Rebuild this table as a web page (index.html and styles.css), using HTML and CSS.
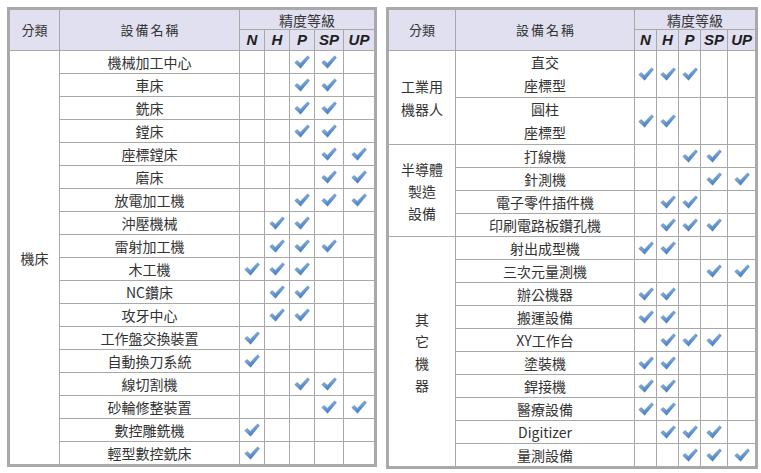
FILE: index.html
```html
<!DOCTYPE html>
<html lang="zh-Hant">
<head>
<meta charset="utf-8">
<link rel="stylesheet" href="styles.css">
</head>
<body>
<svg class="defs" width="0" height="0" aria-hidden="true">
  <defs>
    <linearGradient id="g" x1="0" y1="0" x2="0.6" y2="1">
      <stop offset="0" stop-color="#c0d7f0"/>
      <stop offset="0.45" stop-color="#78a7dc"/>
      <stop offset="1" stop-color="#3870b9"/>
    </linearGradient>
    <symbol id="ck" viewBox="0 0 16 14">
      <path d="M0.8 7.6 L3.2 5.6 L6.3 8.4 L13.6 0.9 L15.4 2.6 L6.6 13.2 Z" fill="url(#g)" stroke="#4a7dbd" stroke-width="0.6" stroke-linejoin="round"/>
    </symbol>
  </defs>
</svg>
<div class="wrap">
<table class="tbl left">
  <colgroup><col class="w-cat"><col class="w-name"><col class="w-n"><col class="w-n"><col class="w-n"><col class="w-sp"><col class="w-up"></colgroup>
  <thead>
    <tr><th rowspan="2" class="h-cat">分類</th><th rowspan="2" class="h-name">設備名稱</th><th colspan="5" class="h-grade">精度等級</th></tr>
    <tr><th class="g">N</th><th class="g">H</th><th class="g">P</th><th class="g">SP</th><th class="g">UP</th></tr>
  </thead>
  <tbody>
    <tr><td rowspan="18" class="cat">機床</td><td>機械加工中心</td><td></td><td></td><td><svg class="ck"><use href="#ck"/></svg></td><td><svg class="ck"><use href="#ck"/></svg></td><td></td></tr>
    <tr><td>車床</td><td></td><td></td><td><svg class="ck"><use href="#ck"/></svg></td><td><svg class="ck"><use href="#ck"/></svg></td><td></td></tr>
    <tr><td>銑床</td><td></td><td></td><td><svg class="ck"><use href="#ck"/></svg></td><td><svg class="ck"><use href="#ck"/></svg></td><td></td></tr>
    <tr><td>鏜床</td><td></td><td></td><td><svg class="ck"><use href="#ck"/></svg></td><td><svg class="ck"><use href="#ck"/></svg></td><td></td></tr>
    <tr><td>座標鏜床</td><td></td><td></td><td></td><td><svg class="ck"><use href="#ck"/></svg></td><td><svg class="ck"><use href="#ck"/></svg></td></tr>
    <tr><td>磨床</td><td></td><td></td><td></td><td><svg class="ck"><use href="#ck"/></svg></td><td><svg class="ck"><use href="#ck"/></svg></td></tr>
    <tr><td>放電加工機</td><td></td><td></td><td><svg class="ck"><use href="#ck"/></svg></td><td><svg class="ck"><use href="#ck"/></svg></td><td><svg class="ck"><use href="#ck"/></svg></td></tr>
    <tr><td>沖壓機械</td><td></td><td><svg class="ck"><use href="#ck"/></svg></td><td><svg class="ck"><use href="#ck"/></svg></td><td></td><td></td></tr>
    <tr><td>雷射加工機</td><td></td><td><svg class="ck"><use href="#ck"/></svg></td><td><svg class="ck"><use href="#ck"/></svg></td><td><svg class="ck"><use href="#ck"/></svg></td><td></td></tr>
    <tr><td>木工機</td><td><svg class="ck"><use href="#ck"/></svg></td><td><svg class="ck"><use href="#ck"/></svg></td><td><svg class="ck"><use href="#ck"/></svg></td><td></td><td></td></tr>
    <tr><td>NC鑽床</td><td></td><td><svg class="ck"><use href="#ck"/></svg></td><td><svg class="ck"><use href="#ck"/></svg></td><td></td><td></td></tr>
    <tr><td>攻牙中心</td><td></td><td><svg class="ck"><use href="#ck"/></svg></td><td><svg class="ck"><use href="#ck"/></svg></td><td></td><td></td></tr>
    <tr><td>工作盤交換裝置</td><td><svg class="ck"><use href="#ck"/></svg></td><td></td><td></td><td></td><td></td></tr>
    <tr><td>自動換刀系統</td><td><svg class="ck"><use href="#ck"/></svg></td><td></td><td></td><td></td><td></td></tr>
    <tr><td>線切割機</td><td></td><td></td><td><svg class="ck"><use href="#ck"/></svg></td><td><svg class="ck"><use href="#ck"/></svg></td><td></td></tr>
    <tr><td>砂輪修整裝置</td><td></td><td></td><td></td><td><svg class="ck"><use href="#ck"/></svg></td><td><svg class="ck"><use href="#ck"/></svg></td></tr>
    <tr><td>數控雕銑機</td><td><svg class="ck"><use href="#ck"/></svg></td><td></td><td></td><td></td><td></td></tr>
    <tr><td>輕型數控銑床</td><td><svg class="ck"><use href="#ck"/></svg></td><td></td><td></td><td></td><td></td></tr>
  </tbody>
</table>

<table class="tbl right">
  <colgroup><col class="r-cat"><col class="r-name"><col class="r-n"><col class="r-n"><col class="r-n"><col class="r-sp"><col class="r-up"></colgroup>
  <thead>
    <tr><th rowspan="2" class="h-cat">分類</th><th rowspan="2" class="h-name">設備名稱</th><th colspan="5" class="h-grade">精度等級</th></tr>
    <tr><th class="g">N</th><th class="g">H</th><th class="g">P</th><th class="g">SP</th><th class="g">UP</th></tr>
  </thead>
  <tbody>
    <tr class="dbl"><td rowspan="2" class="cat">工業用<br>機器人</td><td>直交<br>座標型</td><td><svg class="ck"><use href="#ck"/></svg></td><td><svg class="ck"><use href="#ck"/></svg></td><td><svg class="ck"><use href="#ck"/></svg></td><td></td><td></td></tr>
    <tr class="dbl"><td>圓柱<br>座標型</td><td><svg class="ck"><use href="#ck"/></svg></td><td><svg class="ck"><use href="#ck"/></svg></td><td></td><td></td><td></td></tr>
    <tr><td rowspan="4" class="cat">半導體<br>製造<br>設備</td><td>打線機</td><td></td><td></td><td><svg class="ck"><use href="#ck"/></svg></td><td><svg class="ck"><use href="#ck"/></svg></td><td></td></tr>
    <tr><td>針測機</td><td></td><td></td><td></td><td><svg class="ck"><use href="#ck"/></svg></td><td><svg class="ck"><use href="#ck"/></svg></td></tr>
    <tr><td>電子零件插件機</td><td></td><td><svg class="ck"><use href="#ck"/></svg></td><td><svg class="ck"><use href="#ck"/></svg></td><td></td><td></td></tr>
    <tr><td>印刷電路板鑽孔機</td><td></td><td><svg class="ck"><use href="#ck"/></svg></td><td><svg class="ck"><use href="#ck"/></svg></td><td><svg class="ck"><use href="#ck"/></svg></td><td></td></tr>
    <tr><td rowspan="10" class="cat cat-tall">其<br>它<br>機<br>器</td><td>射出成型機</td><td><svg class="ck"><use href="#ck"/></svg></td><td><svg class="ck"><use href="#ck"/></svg></td><td></td><td></td><td></td></tr>
    <tr><td>三次元量測機</td><td></td><td></td><td></td><td><svg class="ck"><use href="#ck"/></svg></td><td><svg class="ck"><use href="#ck"/></svg></td></tr>
    <tr><td>辦公機器</td><td><svg class="ck"><use href="#ck"/></svg></td><td><svg class="ck"><use href="#ck"/></svg></td><td></td><td></td><td></td></tr>
    <tr><td>搬運設備</td><td><svg class="ck"><use href="#ck"/></svg></td><td><svg class="ck"><use href="#ck"/></svg></td><td></td><td></td><td></td></tr>
    <tr><td>XY工作台</td><td></td><td><svg class="ck"><use href="#ck"/></svg></td><td><svg class="ck"><use href="#ck"/></svg></td><td><svg class="ck"><use href="#ck"/></svg></td><td></td></tr>
    <tr><td>塗裝機</td><td><svg class="ck"><use href="#ck"/></svg></td><td><svg class="ck"><use href="#ck"/></svg></td><td></td><td></td><td></td></tr>
    <tr><td>銲接機</td><td><svg class="ck"><use href="#ck"/></svg></td><td><svg class="ck"><use href="#ck"/></svg></td><td></td><td></td><td></td></tr>
    <tr><td>醫療設備</td><td><svg class="ck"><use href="#ck"/></svg></td><td><svg class="ck"><use href="#ck"/></svg></td><td></td><td></td><td></td></tr>
    <tr><td>Digitizer</td><td></td><td><svg class="ck"><use href="#ck"/></svg></td><td><svg class="ck"><use href="#ck"/></svg></td><td><svg class="ck"><use href="#ck"/></svg></td><td></td></tr>
    <tr><td>量測設備</td><td></td><td></td><td><svg class="ck"><use href="#ck"/></svg></td><td><svg class="ck"><use href="#ck"/></svg></td><td><svg class="ck"><use href="#ck"/></svg></td></tr>
  </tbody>
</table>
</div>
</body>
</html>
```
FILE: styles.css
```css
html, body {
  margin: 0;
  padding: 0;
  background: #ffffff;
}
body {
  font-family: "Noto Sans CJK TC", "Noto Sans CJK SC", "Noto Sans", sans-serif;
  color: #333333;
}
.defs {
  position: absolute;
  width: 0;
  height: 0;
  overflow: hidden;
}
.wrap {
  display: flex;
  align-items: flex-start;
  gap: 9px;
  padding: 7px 0 0 7px;
}
.tbl {
  border-collapse: collapse;
  table-layout: fixed;
  border: 3px solid #a9a9a9;
}
.tbl th, .tbl td {
  border: 1px solid #a8a8a8;
  padding: 0;
  font-size: 14px;
  font-weight: normal;
  text-align: center;
  vertical-align: middle;
  height: 22px;
  line-height: 22px;
  white-space: nowrap;
}
.tbl th {
  background: #e0e0f1;
  line-height: 18px;
}
.tbl th.h-cat {
  font-size: 13px;
}
.tbl th.h-grade {
  height: 19px;
}
.tbl th.h-name {
  font-size: 13px;
  letter-spacing: 2px;
  padding-left: 2px;
}
.tbl th.g {
  font-family: "Liberation Sans", Arial, sans-serif;
  font-weight: bold;
  font-style: italic;
  font-size: 15px;
  color: #1e1e1e;
  height: 20px;
  line-height: 18px;
}
.left { width: 367px; }
.right { width: 369px; }
.w-cat { width: 51px; }
.w-name { width: 180px; }
.w-n { width: 25px; }
.w-sp { width: 29px; }
.w-up { width: 32px; }
.r-cat { width: 68px; }
.r-name { width: 179px; }
.r-n { width: 22px; }
.r-sp { width: 27px; }
.r-up { width: 29px; }
.cat {
  line-height: 23px;
}
.cat-tall {
  line-height: 24px;
}
.dbl td {
  height: 45px;
  line-height: 23px;
}
.ck {
  display: block;
  width: 16px;
  height: 14px;
  margin: 0 auto;
}
```
